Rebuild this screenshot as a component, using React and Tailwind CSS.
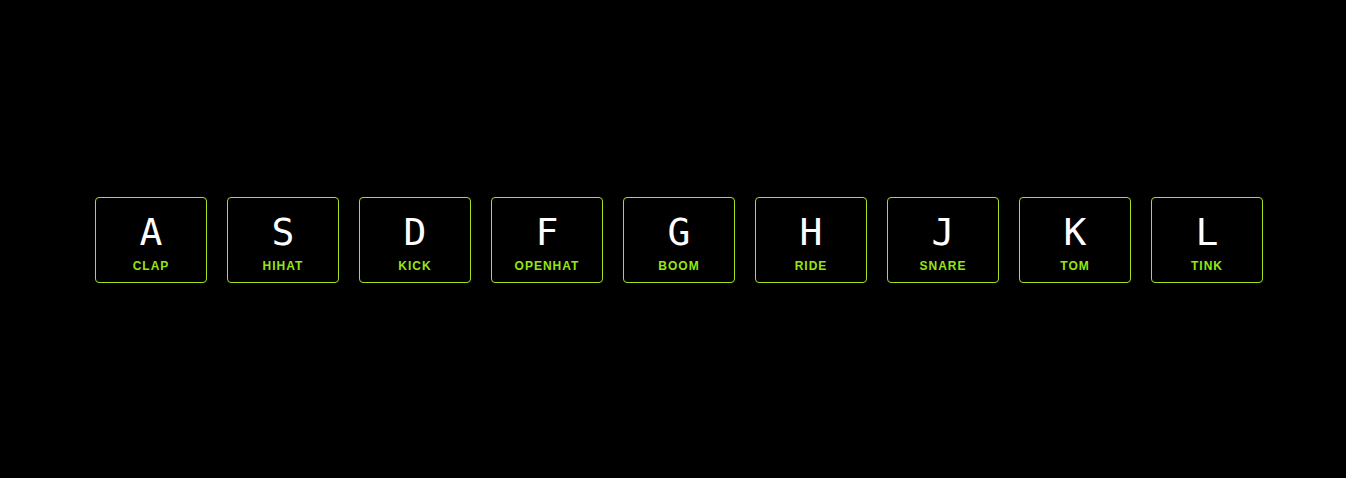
import React from "react";

const keys = [
  { key: "A", sound: "clap" },
  { key: "S", sound: "hihat" },
  { key: "D", sound: "kick" },
  { key: "F", sound: "openhat" },
  { key: "G", sound: "boom" },
  { key: "H", sound: "ride" },
  { key: "J", sound: "snare" },
  { key: "K", sound: "tom" },
  { key: "L", sound: "tink" },
];

function Key({ item }) {
  return (
    <div className="w-[112px] h-[86px] border border-[#a8e01c] rounded-[4px] flex flex-col items-center justify-center bg-black">
      <kbd className="block text-[38px] leading-none text-white font-['DejaVu_Sans_Mono',monospace] mt-[4px]">
        {item.key}
      </kbd>
      <span className="block mt-[9px] text-[12px] leading-none tracking-[1px] uppercase font-semibold text-[#95e612] font-['Liberation_Sans',Arial,sans-serif]">
        {item.sound}
      </span>
    </div>
  );
}

export default function App() {
  return (
    <div className="min-h-screen h-[478px] bg-black flex items-center justify-center gap-[20px] pl-[12px] pt-[2px]">
      {keys.map((k) => (
        <Key key={k.key} item={k} />
      ))}
    </div>
  );
}
